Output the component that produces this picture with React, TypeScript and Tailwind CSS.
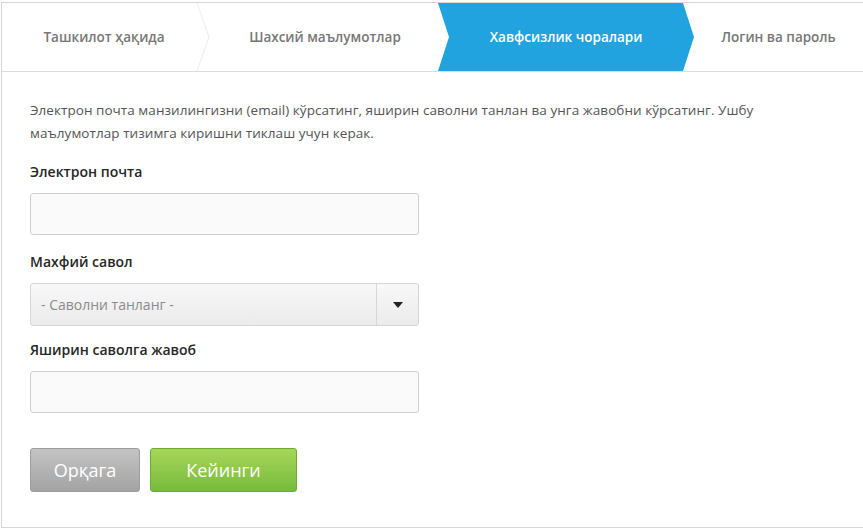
import React from "react";

function Steps() {
  return (
    <div className="relative h-[69px] border-b border-[#dcdcdc] flex text-[13.5px] font-semibold text-[#777]">
      <div className="w-[200px] flex items-center justify-center pl-[4px]">Ташкилот ҳақида</div>
      <svg className="absolute left-[194px] top-0" width="16" height="68" viewBox="0 0 16 68">
        <polyline points="1,0 13,34 1,68" fill="none" stroke="#ececec" strokeWidth="1" />
      </svg>
      <div className="w-[236px] flex items-center justify-center pl-[10px]">Шахсий маълумотлар</div>
      <div className="relative w-[246px] flex items-center justify-center">
        <svg className="absolute left-0 top-0" width="258" height="68" viewBox="0 0 258 68" preserveAspectRatio="none">
          <polygon points="0,0 245,0 256,34 245,68 0,68 11,34" fill="#20a3de" />
        </svg>
        <span className="relative text-white pl-[10px]">Хавфсизлик чоралари</span>
      </div>
      <div className="flex-1 flex items-center justify-center pl-[10px]">Логин ва пароль</div>
    </div>
  );
}

function Label({ children }: { children: React.ReactNode }) {
  return <div className="text-[14px] text-[#262626] leading-[20px] font-semibold">{children}</div>;
}

export default function App() {
  return (
    <div className="w-[863px] h-[530px] bg-white pt-[2px] pl-[1px]" style={{ fontFamily: '"Open Sans", "Noto Sans", sans-serif' }}>
      <div className="border-l border-t border-b border-[#d6d6d6] h-[526px]">
        <Steps />
        <div className="pl-[28px] pt-[27px]">
          <p className="text-[13.5px] leading-[23px] text-[#555] tracking-[0.05px] w-[770px]">
            Электрон почта манзилингизни (email) кўрсатинг, яширин саволни танлан ва унга жавобни кўрсатинг. Ушбу маълумотлар тизимга киришни тиклаш учун керак.
          </p>
          <div className="mt-[17px]">
            <Label>Электрон почта</Label>
          </div>
          <div className="mt-[11px] w-[389px] h-[42px] rounded-[3px] border border-[#cfcfcf] bg-[#fafafa]" />
          <div className="mt-[17px]">
            <Label>Махфий савол</Label>
          </div>
          <div className="mt-[11px] w-[389px] h-[43px] rounded-[3px] border border-[#d6d6d6] bg-gradient-to-b from-[#f8f8f8] to-[#ebebeb] flex">
            <div className="flex-1 flex items-center pl-[10px] text-[14px] text-[#8a8a8a]">- Саволни танланг -</div>
            <div className="w-[42px] border-l border-[#d6d6d6] flex items-center justify-center">
              <svg width="10" height="6" viewBox="0 0 10 6">
                <polygon points="0,0 10,0 5,6" fill="#222" />
              </svg>
            </div>
          </div>
          <div className="mt-[14px]">
            <Label>Яширин саволга жавоб</Label>
          </div>
          <div className="mt-[11px] w-[389px] h-[42px] rounded-[3px] border border-[#cfcfcf] bg-[#fafafa]" />
          <div className="mt-[35px] flex gap-[10px]">
            <button className="w-[110px] h-[44px] rounded-[3px] border border-[#9d9d9d] bg-gradient-to-b from-[#c4c4c4] to-[#a3a3a3] text-white text-[18px]">
              Орқага
            </button>
            <button className="w-[147px] h-[44px] rounded-[3px] border border-[#6aad2f] bg-gradient-to-b from-[#a6d65a] to-[#78bb3a] text-white text-[18px]">
              Кейинги
            </button>
          </div>
        </div>
      </div>
    </div>
  );
}
